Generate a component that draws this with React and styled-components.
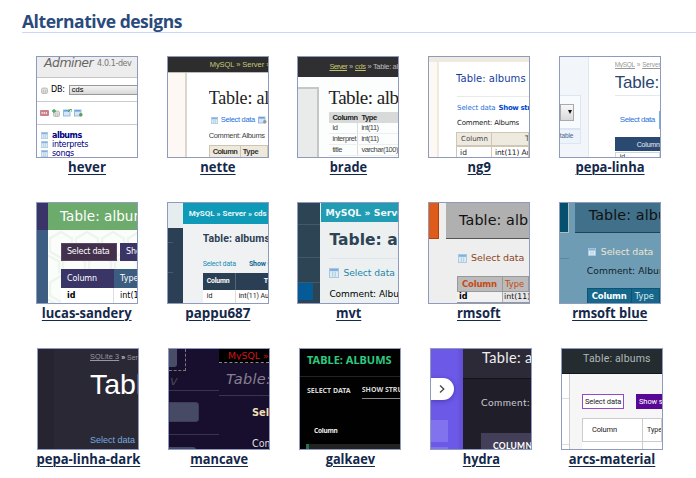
import React from "react";
import styled, { createGlobalStyle, css } from "styled-components";

const SANS = '"Liberation Sans", Arial, sans-serif';
const WIDE = '"DejaVu Sans", Verdana, sans-serif';
const SERIF = '"Liberation Serif", Georgia, serif';
const ROBOTO = 'Roboto, sans-serif';
const NOTO = '"Noto Sans", sans-serif';
const LATO = 'Lato, sans-serif';

const Global = createGlobalStyle`
  * { box-sizing: border-box; }
  body { margin: 0; background: #fff; overflow: hidden; }
`;

const Page = styled.main`
  height: 478px;
  padding: 10px 0 0 22px;
  overflow: hidden;
`;

const Heading = styled.h2`
  margin: 0;
  height: 23px;
  border-bottom: 1px solid #ccd5fb;
  font: 700 17.5px/23px "Open Sans", sans-serif;
  letter-spacing: -0.46px;
  color: #2b4a7c;
`;

const Gallery = styled.div`
  padding-top: 23px;
`;

const GalleryRow = styled.div`
  display: flex;
  gap: ${(p) => p.$gap}px;
  height: 146px;
  padding-left: ${(p) => p.$indent}px;
`;

const Card = styled.figure`
  margin: 0;
  width: 102px;
  display: flex;
  flex-direction: column;
  align-items: center;
`;

const Caption = styled.a`
  font: 700 14.7px/17px "Open Sans", sans-serif;
  transform: scaleX(${(p) => p.$narrow});
  white-space: nowrap;
  color: #14284b;
  text-decoration: underline;
  text-decoration-thickness: 1px;
  text-underline-offset: 2px;
`;

const Shot = styled.div`
  display: flex;
  width: 102px;
  height: 102px;
  flex: none;
  overflow: hidden;
  border: 1px solid #8f9abf;
  background: ${(p) => p.$bg || "#fff"};
  font-family: ${(p) => p.$font || SANS};
`;

const Side = styled.div`
  flex: none;
  width: ${(p) => p.$w}px;
  height: 100%;
  overflow: hidden;
  background: ${(p) => p.$bg || "transparent"};
  border-right: ${(p) => p.$edge || "0"};
`;

const Pane = styled.div`
  flex: 1;
  min-width: 0;
  height: 100%;
  overflow: hidden;
  background: ${(p) => p.$bg || "transparent"};
`;

const HexPane = styled(Pane)`
  background: url("data:image/svg+xml,%3Csvg xmlns='http://www.w3.org/2000/svg' width='26' height='44'%3E%3Cpath d='M13 2l11 6.500v13l-11 6.500-11-6.500v-13zM0 25.500l11 6v12M26 25.500l-11 6v12' fill='none' stroke='%23edf5ed' stroke-width='2.500'/%3E%3C/svg%3E") 0 27px;
`;

const Columns = styled.div`
  display: flex;
  height: ${(p) => p.$h}px;
`;

const Block = styled.div`
  display: flex;
  flex: none;
  align-items: center;
  overflow: hidden;
  height: ${(p) => p.$h}px;
  width: ${(p) => (p.$w ? `${p.$w}px` : "auto")};
  margin: ${(p) => p.$t || 0}px 0 0 ${(p) => p.$l || 0}px;
  padding-left: ${(p) => p.$pad || 0}px;
  background: ${(p) => p.$bg || "transparent"};
  border: ${(p) => p.$border || "0"};
  border-radius: ${(p) => p.$radius || "0"};
  ${(p) => p.$under && css`border-bottom: ${p.$under};`}
  ${(p) => p.$edge && css`border-right: ${p.$edge};`}
`;

const Text = styled.span`
  flex: none;
  white-space: pre;
  line-height: 1;
  font-size: ${(p) => p.$s}px;
  color: ${(p) => p.$c || "#222"};
  font-weight: ${(p) => (p.$b ? 700 : 400)};
  font-style: ${(p) => (p.$i ? "italic" : "normal")};
  font-family: ${(p) => p.$font || "inherit"};
  letter-spacing: ${(p) => p.$k || 0}px;
  margin-left: ${(p) => p.$l || 0}px;
  text-decoration: ${(p) => (p.$u ? "underline" : "none")};
`;

const IconBox = styled.svg`
  flex: none;
  display: block;
  margin-left: ${(p) => p.$l || 0}px;
`;

function TableIcon({ l, size = 7 }) {
  return (
    <IconBox $l={l} width={size} height={size} viewBox="0 0 8 8">
      <rect x=".4" y=".4" width="7.2" height="7.2" fill="#dcebf8" stroke="#a9c7e4" strokeWidth=".8" />
      <rect x=".8" y=".8" width="6.4" height="1.7" fill="#7eafe0" />
      <path d="M3 3v4M5 3v4" stroke="#a4c9c6" strokeWidth=".7" />
    </IconBox>
  );
}

function DbIcon({ l, add }) {
  return (
    <IconBox $l={l} width="8" height="8" viewBox="0 0 8 8">
      <rect x="1.5" y="2" width="6" height="5.5" rx="1.5" fill="#ddd" stroke="#aaa" strokeWidth=".7" />
      <path d="M3.5 4v3M5.5 4v3" stroke="#bbb" strokeWidth=".7" />
      {add && <path d="M2 0v4M0 2h4" stroke="#48a858" strokeWidth="1.3" />}
    </IconBox>
  );
}

function SqlIcon({ l }) {
  return (
    <IconBox $l={l} width="9" height="6" viewBox="0 0 9 6">
      <rect width="9" height="6" rx="1" fill="#c98288" />
      <path d="M1.5 3h6" stroke="#f3dadc" strokeDasharray="1.3 .8" strokeWidth="2" />
    </IconBox>
  );
}

function BadgeIcon({ l, up, gray }) {
  return (
    <IconBox $l={l} width="9" height="8" viewBox="0 0 9 8">
      <rect x=".5" y="1" width="6.5" height="6" fill="#d3e5f6" stroke="#86afd8" strokeWidth=".8" />
      <rect x="1" y="1" width="5.5" height="1.6" fill="#69a0d9" />
      {up ? (
        <path d="M5 3l3-3M5.5 0H9v3" stroke="#43a852" fill="none" />
      ) : (
        <circle cx="6.8" cy="5.8" r="1.8" fill={gray ? "#999" : "#5c9c5c"} />
      )}
    </IconBox>
  );
}

function Hever() {
  return (
    <Shot $font={WIDE}>
      <Pane>
        <Block $h={13} $bg="#ededed">
          <Text $s={12.5} $c="#666" $i $l={7} $k={-0.55}>Adminer</Text>
          <Text $s={8} $c="#777" $l={4} $k={-0.4}>4.0.1-dev</Text>
        </Block>
        <Block $h={8} $bg="#ededed" $under="1px solid #c5c5c5" />
        <Block $h={24} $under="1px solid #ccc">
          <DbIcon l={3} />
          <Text $s={8} $c="#000" $l={3} $k={-0.2}>DB:</Text>
          <Block $h={10} $w={80} $l={4} $pad={2} $bg="linear-gradient(#f4f4f4,#d8d8d8)" $border="1px solid #999">
            <Text $s={7.5} $font={SANS} $c="#000">cds</Text>
          </Block>
        </Block>
        <Block $h={23} $under="1px solid #ccc">
          <SqlIcon l={3} /><DbIcon l={3} add /><BadgeIcon l={3} up /><BadgeIcon l={2} />
        </Block>
        <Block $h={9} $t={6}><TableIcon l={4} /><Text $s={8} $b $c="#000080" $l={4} $k={-0.5}>albums</Text></Block>
        <Block $h={9}><TableIcon l={4} /><Text $s={8} $c="#000080" $l={4} $k={-0.3}>interprets</Text></Block>
        <Block $h={9}><TableIcon l={4} /><Text $s={8} $c="#000080" $l={4} $k={-0.3}>songs</Text></Block>
      </Pane>
    </Shot>
  );
}

function Nette() {
  return (
    <Shot>
      <Pane>
        <Block $h={16} $bg="#2e2d2e" $under="1px solid #bbb">
          <Block $h={11}><Text $s={7.5} $c="#c5c777" $l={42} $k={-0.05}>MySQL » Server » cds</Text></Block>
        </Block>
        <Columns $h={84}>
          <Side $w={19} $bg="#fdf8f3" $edge="2px solid #dcd7cb" />
          <Pane>
            <Block $h={18} $t={16} $l={22}><Text $s={18} $font={SERIF} $c="#222" $k={-0.2}>Table: al</Text></Block>
            <Block $h={10} $t={8} $l={24}>
              <TableIcon /><Text $s={7.5} $c="#1e6fdc" $l={3} $k={-0.3}>Select data</Text><BadgeIcon l={3} gray />
            </Block>
            <Block $h={10} $t={6} $l={22}><Text $s={7.5} $c="#444" $k={-0.35}>Comment: Albums</Text></Block>
            <Block $h={14} $t={4} $l={22} $bg="#eee9dc" $border="1px solid #cdc5b0">
              <Block $h={13} $w={31} $pad={3} $edge="1px solid #cdc5b0"><Text $s={7.5} $b $c="#333" $k={-0.55}>Column</Text></Block>
              <Text $s={7.5} $b $c="#333" $l={2} $k={-0.35}>Type</Text>
            </Block>
          </Pane>
        </Columns>
      </Pane>
    </Shot>
  );
}

function Brade() {
  return (
    <Shot $bg="#fcfdfd">
      <Pane>
        <Block $h={20} $bg="#2f2e30">
          <Text $s={7.5} $c="#c2c36a" $l={31} $u $k={-0.75}>Server</Text>
          <Text $s={7.5} $c="#bbb" $k={-0.1}> » </Text>
          <Text $s={7.5} $c="#c2c36a" $u $k={-0.3}>cds</Text>
          <Text $s={7.5} $c="#bbb" $k={-0.35}> » Table: albums</Text>
        </Block>
        <Columns $h={80}>
          <Side $w={21}><Block $h={80} $t={10} $bg="#e8ebea" $border="2px solid #c5c7c6" $l={-3} /></Side>
          <Pane>
            <Block $h={19} $t={11} $l={9}><Text $s={19} $font={SERIF} $k={-0.5}>Table: alb</Text></Block>
            <Block $h={11} $t={5} $l={10} $bg="#d8d9d9">
              <Block $h={11} $w={29} $pad={3}><Text $s={7.5} $b $k={-0.45}>Column</Text></Block>
              <Text $s={7.5} $b $l={3} $k={-0.4}>Type</Text>
            </Block>
            {[["id", "int(11)"], ["interpret", "int(11)"], ["title", "varchar(100)"]].map(([a, b]) => (
              <Block key={a} $h={11} $l={10} $under="1px solid #eee">
                <Block $h={11} $w={29} $pad={3} $edge="1px solid #ddd"><Text $s={7.5} $c="#444" $k={-0.4}>{a}</Text></Block>
                <Text $s={7.5} $c="#444" $l={3} $k={-0.5}>{b}</Text>
              </Block>
            ))}
          </Pane>
        </Columns>
      </Pane>
    </Shot>
  );
}

function Ng9() {
  return (
    <Shot $font={WIDE}>
      <Pane>
        <Block $h={5} $bg="#efeadf" />
        <Columns $h={95}>
          <Side $w={10} $bg="#fdf8f3" $edge="2px solid #efeadf" />
          <Pane>
            <Block $h={12} $t={11} $l={17}><Text $s={10} $c="#1540a0" $k={0.05}>Table: albums</Text></Block>
            <Block $h={12} $l={18} $under="1px solid #e9e9e9" />
            <Block $h={10} $t={6} $l={18}>
              <Text $s={7} $c="#1e6fdc" $k={-0.1}>Select data</Text>
              <Text $s={7} $c="#0047d0" $b $l={3} $k={-0.35}>Show structure</Text>
            </Block>
            <Block $h={10} $t={5} $l={18}><Text $s={7} $c="#222" $k={-0.2}>Comment: Albums</Text></Block>
            <Block $h={14} $t={4} $l={17} $bg="#efeadf" $border="1px solid #cfc7b6">
              <Block $h={14} $w={35} $pad={4} $edge="1px solid #cfc7b6"><Text $s={7} $c="#444">Column</Text></Block>
              <Text $s={7.5} $c="#444" $l={33}>Type</Text>
            </Block>
            <Block $h={13} $l={17} $border="1px solid #cfc7b6">
              <Block $h={14} $w={35} $pad={3} $edge="1px solid #cfc7b6"><Text $s={7.5}>id</Text></Block>
              <Text $s={7.5} $l={3} $k={-0.15}>int(11) Auto</Text>
            </Block>
          </Pane>
        </Columns>
      </Pane>
    </Shot>
  );
}

function PepaLinha() {
  return (
    <Shot>
      <Side $w={29} $bg="#f2f6fb" $edge="1px solid #dee7f2">
        <Block $h={34} $w={22} $t={38} $l={-1} $bg="#f8fbfe" $border="1px solid #dce6f3">
          <Block $h={17} $w={14} $pad={7} $bg="linear-gradient(#f8f8f8,#d9d9d9)" $border="1px solid #aaa">
            <IconBox width="4" height="4" viewBox="0 0 4 4"><path d="M0 0h4L2 4z" fill="#111" /></IconBox>
          </Block>
        </Block>
        <Block $h={15} $w={22} $l={-1} $bg="#edf3fa" $border="1px solid #dce6f3"><Text $s={6.5} $c="#466487" $k={-0.1}>table</Text></Block>
      </Side>
      <Pane>
        <Block $h={9} $t={4} $l={26}>
          <Text $s={6.5} $c="#999" $u $k={-0.3}>MySQL</Text><Text $s={6.5} $c="#999"> » </Text><Text $s={6.5} $c="#999" $u $k={-0.15}>Server</Text>
        </Block>
        <Block $h={18} $t={3} $l={26}><Text $s={17} $c="#2a4670" $k={-0.2}>Table: albums</Text></Block>
        <Block $h={5} $l={26} $under="1px solid #e5e8ee" />
        <Block $h={18} $t={15} $l={31}>
          <Text $s={8} $c="#2b76d6" $k={-0.45}>Select data</Text><Block $h={18} $w={8} $l={4} $bg="#78aee9" />
        </Block>
        <Block $h={14} $t={8} $l={26} $bg="#2b4a72" $pad={22}><Text $s={7} $c="#e8eef6" $k={-0.2}>Column</Text></Block>
        <Block $h={9} $t={1} $l={26} $pad={4} $border="1px solid #ccd6e2"><Text $s={7} $c="#333">id</Text></Block>
      </Pane>
    </Shot>
  );
}

function LucasSandery() {
  return (
    <Shot $font={WIDE} $bg="#fbfdfb">
      <Side $w={11} $bg="#3e5d83"><Block $h={27} $bg="#3a3568" /></Side>
      <HexPane>
        <Block $h={27} $bg="#6dab6c"><Text $s={13.5} $c="#fff" $l={12} $k={0.05}>Table: albums</Text></Block>
        <Block $h={18} $t={13} $l={13}>
          <Block $h={18} $w={56} $pad={5} $bg="#42304c" $border="1px solid #5a4763"><Text $s={8} $c="#fff" $k={-0.25}>Select data</Text></Block>
          <Block $h={18} $w={50} $pad={6} $l={3} $bg="#3b3566"><Text $s={8} $c="#fff" $k={-0.1}>Show</Text></Block>
        </Block>
        <Block $h={19} $t={8} $l={13} $bg="#3c5c80">
          <Block $h={19} $w={53} $pad={6} $bg="#3a3567"><Text $s={8} $c="#fff" $k={-0.1}>Column</Text></Block>
          <Text $s={8} $c="#fff" $l={6}>Type</Text>
        </Block>
        <Block $h={16} $l={13} $bg="#fff">
          <Block $h={16} $w={53} $pad={6} $edge="1px solid #ddd"><Text $s={8} $b $c="#000">id</Text></Block>
          <Text $s={8} $l={6} $c="#000">int(11)</Text>
        </Block>
      </HexPane>
    </Shot>
  );
}

function Pappu() {
  return (
    <Shot $font={ROBOTO} $bg="#f0f1f2">
      <Side $w={15} $bg="#2b4055">
        <Block $h={25} $bg="#e5edef" />
        <Block $h={15} $w={5} $under="1px solid #465b6d" /><Block $h={30} $w={5} $under="1px solid #465b6d" />
      </Side>
      <Pane>
        <Block $h={21} $bg="#0f9bb8">
          <Block $h={16}><Text $s={8} $b $c="#e8f6f8" $l={6} $k={0}>MySQL » Server » cds »</Text></Block>
        </Block>
        <Block $h={14} $t={8} $l={20}><Text $s={10.5} $b $c="#2b4055" $k={0.1}>Table: albums</Text></Block>
        <Block $h={10} $t={13} $l={20}>
          <Text $s={7} $c="#168bb5" $k={-0.15}>Select data</Text><Text $s={7} $b $c="#126a91" $l={13} $k={-0.1}>Show structure</Text>
        </Block>
        <Block $h={17} $t={4} $l={20} $bg="#2a3f54">
          <Block $h={17} $w={33} $pad={4} $edge="1px solid #52667a"><Text $s={6.8} $b $c="#fff" $k={-0.15}>Column</Text></Block>
          <Text $s={7} $b $c="#fff" $l={28}>Type</Text>
        </Block>
        <Block $h={13} $l={20} $bg="#fff">
          <Block $h={13} $w={33} $pad={4} $edge="1px solid #ddd"><Text $s={7}>id</Text></Block><Text $s={7} $l={3} $k={-0.05}>int(11) Auto</Text>
        </Block>
      </Pane>
    </Shot>
  );
}

function Mvt() {
  return (
    <Shot $font={WIDE} $bg="#ecf0f1">
      <Side $w={22} $bg="#2d4455">
        <Block $h={22} $under="1px solid #43596a" /><Block $h={33} $under="1px solid #43596a" /><Block $h={25} $under="1px solid #43596a" />
        <Block $h={17} $w={15} $bg="#045b97" />
      </Side>
      <Pane>
        <Block $h={19} $l={1} $bg="#219cb3"><Text $s={9.3} $b $c="#eef8f9" $l={4} $k={0}>MySQL » Server</Text></Block>
        <Block $h={18} $t={10} $l={9}><Text $s={15.5} $b $c="#2d4455" $k={0.05}>Table: albums</Text></Block>
        <Block $h={9} $l={9} $under="1px solid #e0e5e7" />
        <Block $h={12} $t={8} $l={9}><TableIcon size={10} /><Text $s={9.2} $c="#2586a7" $l={4} $k={-0.05}>Select data</Text></Block>
        <Block $h={12} $t={9} $l={9}><Text $s={9} $c="#000" $k={-0.05}>Comment: Albums</Text></Block>
      </Pane>
    </Shot>
  );
}

function Rmsoft() {
  return (
    <Shot $font={WIDE} $bg="#eee">
      <Side $w={17}><Block $h={36} $w={10} $bg="#df5b19" $under="1px solid #b34208" $edge="1px solid #b34208" /></Side>
      <Pane>
        <Block $h={36} $bg="#b0b0b0" $under="1px solid #555"><Text $s={14.3} $c="#111" $l={13} $k={0.1}>Table: albums</Text></Block>
        <Block $h={12} $t={13} $l={12}><TableIcon size={9} /><Text $s={9.5} $c="#8c4520" $l={4} $k={-0.05}>Select data</Text></Block>
        <Block $h={16} $t={12} $l={11} $bg="#bbb" $border="1px solid #999">
          <Block $h={16} $w={45} $pad={4} $edge="1px solid #999"><Text $s={8.5} $b $c="#c54a12" $k={-0.2}>Column</Text></Block>
          <Text $s={8.3} $c="#c54a12" $l={2}>Type</Text>
        </Block>
        <Block $h={10} $l={11} $bg="#e6e6e6">
          <Block $h={10} $w={46} $pad={2} $bg="#f2f2f2" $edge="1px solid #aaa"><Text $s={8} $b $c="#000">id</Text></Block>
          <Text $s={7.8} $c="#111" $l={1}>int(11)</Text>
        </Block>
        <Block $h={2} $l={11} $bg="#999" />
      </Pane>
    </Shot>
  );
}

function RmsoftBlue() {
  return (
    <Shot $font={WIDE} $bg="#6d9cb4">
      <Side $w={15}>
        <Block $h={30} $w={9} $bg="#06506f" $under="1px solid #b3bfb5" $edge="1px solid #b3bfb5" />
        <Block $h={26} $w={9} $under="1px solid #568ba5" />
      </Side>
      <Pane>
        <Block $h={24} $bg="#40708a"><Text $s={14.3} $c="#111" $l={14} $k={0.1}>Table: albums</Text></Block>
        <Block $h={6} $bg="#40708a" $under="1px solid #1d4456" />
        <Block $h={12} $t={13} $l={13}><TableIcon size={8} /><Text $s={9.4} $c="#eee6d2" $l={5} $k={-0.05}>Select data</Text></Block>
        <Block $h={12} $t={7} $l={12}><Text $s={9.2} $c="#10222c" $k={0.05}>Comment: Albums</Text></Block>
        <Block $h={17} $t={11} $l={12} $bg="#15688b" $border="1px solid #0b5472">
          <Block $h={17} $w={44} $pad={4} $edge="1px solid #0b5472"><Text $s={8.5} $b $c="#fff" $k={-0.2}>Column</Text></Block>
          <Text $s={8.3} $c="#dcecf2" $l={3}>Type</Text>
        </Block>
      </Pane>
    </Shot>
  );
}

function PepaLinhaDark() {
  return (
    <Shot $bg="#2b2836">
      <Side $w={16} $bg="#272431" />
      <Pane>
        <Block $h={8} $t={4} $l={36}>
          <Text $s={7.3} $c="#99969f" $u $k={0.1}>SQLite 3</Text><Text $s={7} $c="#eee"> » </Text><Text $s={7} $c="#99969f" $u>Server</Text>
        </Block>
        <Block $h={34} $t={6} $l={36}><Text $s={28.5} $c="#fff">Table</Text></Block>
        <Block $h={12} $t={33} $l={36}><Text $s={9} $c="#76a8df">Select data</Text></Block>
      </Pane>
    </Shot>
  );
}

function Mancave() {
  return (
    <Shot $font={WIDE} $bg="#170f2d">
      <Side $w={50}>
        <Block $h={22} $w={17} $under="1px dashed #777" $edge="1px dashed #777">
          <Block $h={18} $w={8} $t={-4} $bg="#4a4d68" $radius="0 0 3px 0" />
        </Block>
        <Block $h={20} $under="1px solid #39354a"><Text $s={13} $i $c="#494456" $l={1}>v</Text></Block>
        <Block $h={20} $w={30} $t={11} $bg="#474a65" $border="1px solid #3c3e55" $radius="0 3px 3px 0" />
        <Block $h={13} $under="1px solid #39354a" />
        <Block $h={4} $w={27} $t={12} $bg="#474a65" $radius="0 3px 0 0" />
      </Side>
      <Pane>
        <Block $h={14} $bg="#000" $under="1px dashed #888">
          <Block $h={9}><Text $s={9.3} $c="#d0151b" $l={9}>MySQL »</Text></Block>
        </Block>
        <Block $h={33} $under="1px solid #39354a"><Text $s={14.5} $i $c="#858091" $l={7} $k={0.35}>Table: albums</Text></Block>
        <Block $h={12} $t={11} $l={33}><Text $s={9.8} $b $c="#f0dfb2">Select data</Text></Block>
        <Block $h={12} $t={19} $l={33}><Text $s={9.6} $c="#ddd">Comment</Text></Block>
      </Pane>
    </Shot>
  );
}

function Galkaev() {
  return (
    <Shot $font={NOTO} $bg="#010101">
      <Pane>
        <Block $h={20}><Text $s={11} $b $c="#2dc980" $l={7}>TABLE: ALBUMS</Text></Block>
        <Block $h={8} $under="1px solid #242424" />
        <Block $h={22}>
          <Block $h={18} $t={4}><Text $s={7} $b $c="#d8d8d8" $l={7}>SELECT DATA</Text></Block>
          <Block $h={18} $t={4} $l={11} $under="1px solid #888"><Text $s={7} $b $c="#d8d8d8">SHOW STRUCTURE</Text></Block>
        </Block>
        <Block $h={10} $t={27} $l={14}><Text $s={6.5} $b $c="#eee" $k={-0.25}>Column</Text></Block>
        <Block $h={5} $t={8} $l={6} $bg="#222"><Block $h={5} $w={3} $bg="#2c6e52" /></Block>
      </Pane>
    </Shot>
  );
}

const Pill = styled(Block)`
  box-shadow: 0 1px 5px rgba(20, 10, 80, 0.4);
`;

function Hydra() {
  return (
    <Shot $font={LATO} $bg="#201e28">
      <Side $w={32} $bg="linear-gradient(90deg,#6c59e8 80%,#604dd0)">
        <Pill $h={22} $w={23} $t={29} $pad={8} $bg="#fff" $radius="0 11px 11px 0">
          <IconBox width="6" height="8" viewBox="0 0 6 8"><path d="M1 .5L4.8 4 1 7.5" fill="none" stroke="#444" strokeWidth="1.3" /></IconBox>
        </Pill>
        <Block $h={22} $w={17} $t={20} $bg="#8172ee" /><Block $h={3} $w={17} $t={5} $bg="#8172ee" />
      </Side>
      <Pane>
        <Block $h={19} $bg="#2d2a38"><Text $s={14.5} $c="#eee" $l={19} $k={0.35}>Table: albums</Text></Block>
        <Block $h={11} $bg="#2d2a38" $under="1px solid #14121a" />
        <Block $h={12} $t={17} $l={18}><Text $s={10} $c="#c9c7d0" $k={0.4}>Comment:</Text></Block>
        <Block $h={26} $t={25} $l={18} $pad={12} $bg="#443f58"><Text $s={8.5} $b $c="#fff" $k={0.3}>COLUMN</Text></Block>
      </Pane>
    </Shot>
  );
}

function ArcsMaterial() {
  return (
    <Shot $font={ROBOTO} $bg="#f6f6f6">
      <Pane>
        <Block $h={20} $bg="#242c30"><Text $s={10.5} $c="#b1b7b8" $l={21} $k={0.2}>Table: albums</Text></Block>
        <Block $h={5} $bg="#242c30" $under="1px solid #11181b" />
        <Columns $h={75}>
          <Side $w={8} $bg="#fff" $edge="1px solid #ccc">
            <Block $h={25} $under="1px solid #ddd" /><Block $h={46} $under="1px solid #ddd" />
          </Side>
          <Pane>
            <Block $h={15} $t={20} $l={12}>
              <Block $h={15} $w={42} $pad={2} $bg="#fff" $border="1px solid #934ac4"><Text $s={7.5} $k={-0.1}>Select data</Text></Block>
              <Block $h={15} $w={40} $pad={3} $l={12} $bg="#580894"><Text $s={7.5} $c="#fff" $k={-0.1}>Show structure</Text></Block>
            </Block>
            <Block $h={24} $t={9} $l={12} $bg="#fff" $border="1px solid #ccc">
              <Block $h={24} $w={60} $pad={9} $edge="1px solid #ccc"><Text $s={7.5} $k={-0.15}>Column</Text></Block>
              <Text $s={7} $l={4}>Type</Text>
            </Block>
            <Block $h={9} $l={12} $bg="#fff"><Block $h={9} $w={61} $edge="1px solid #ccc" /></Block>
          </Pane>
        </Columns>
      </Pane>
    </Shot>
  );
}

const ROWS = [
  { indent: 14, gap: 28.7, items: [
    ["hever", Hever, 0.9], ["nette", Nette, 0.89], ["brade", Brade, 0.87], ["ng9", Ng9, 0.88], ["pepa-linha", PepaLinha, 0.885],
  ] },
  { indent: 14, gap: 28.7, items: [
    ["lucas-sandery", LucasSandery, 0.885], ["pappu687", Pappu, 0.91], ["mvt", Mvt, 0.87], ["rmsoft", Rmsoft, 0.88], ["rmsoft blue", RmsoftBlue, 0.88],
  ] },
  { indent: 15, gap: 29, items: [
    ["pepa-linha-dark", PepaLinhaDark, 0.89], ["mancave", Mancave, 0.87], ["galkaev", Galkaev, 0.87], ["hydra", Hydra, 0.87], ["arcs-material", ArcsMaterial, 0.885],
  ] },
];

export default function App() {
  return (
    <Page>
      <Global />
      <Heading>Alternative designs</Heading>
      <Gallery>
        {ROWS.map((row, i) => (
          <GalleryRow key={i} $indent={row.indent} $gap={row.gap}>
            {row.items.map(([name, Preview, narrow]) => (
              <Card key={name}>
                <Preview />
                <Caption href="#" $narrow={narrow}>{name}</Caption>
              </Card>
            ))}
          </GalleryRow>
        ))}
      </Gallery>
    </Page>
  );
}
